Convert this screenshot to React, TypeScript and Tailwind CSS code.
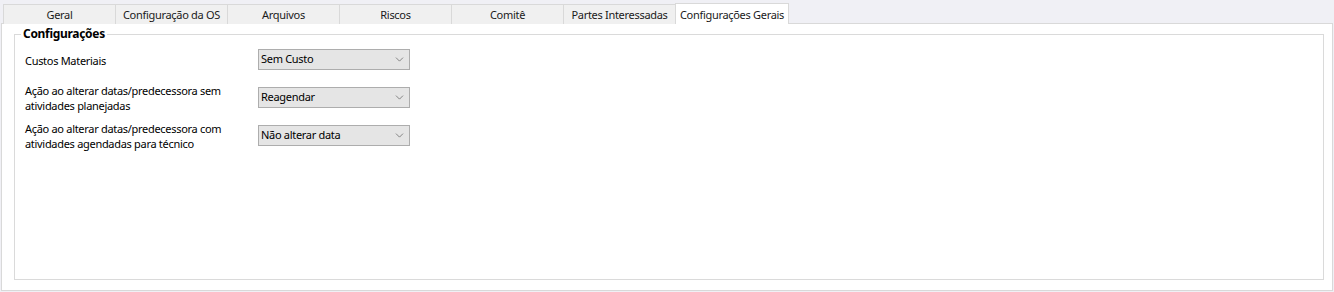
import { ChevronDown } from "lucide-react";

const tabs = [
  "Geral",
  "Configuração da OS",
  "Arquivos",
  "Riscos",
  "Comitê",
  "Partes Interessadas",
];

function Select({ value }: { value: string }) {
  return (
    <div className="w-[152px] h-[21px] bg-[#e5e5e5] border border-[#adadad] flex items-center justify-between pl-[2px] pr-[3px] text-black">
      <span className="whitespace-nowrap">{value}</span>
      <ChevronDown className="w-[13px] h-[13px] text-[#505050]" strokeWidth={1.2} />
    </div>
  );
}

export default function App() {
  return (
    <div
      className="w-[1334px] h-[292px] bg-[#f0f0f5] flex flex-col text-[11px] tracking-[-0.3px] text-black"
      style={{ fontFamily: '"Noto Sans", "Open Sans", sans-serif' }}
    >
      {/* Tab strip */}
      <div className="flex items-end pl-[3px] pt-[3px] h-[24px] relative z-10 -mb-px">
        {tabs.map((t) => (
          <div
            key={t}
            className="w-[112px] h-[20px] bg-[#f0f0f0] border-t border-l border-[#d9d9d9] flex items-center justify-center leading-none whitespace-nowrap text-[#1a1a1a]"
          >
            {t}
          </div>
        ))}
        <div className="w-[114px] h-[21px] bg-white border-t border-l border-r border-[#d9d9d9] flex items-center justify-center leading-none whitespace-nowrap text-[#1a1a1a]">
          Configurações Gerais
        </div>
      </div>

      {/* Panel */}
      <div className="ml-px mr-px mb-px flex-1 bg-white border border-[#d9d9d9] pl-[12px] pr-[8px] pt-[2px] pb-[10px] flex">
        <fieldset className="flex-1 border border-[#dadada] pl-0 pt-[7px]">
          <legend className="ml-[6px] px-[2px] font-bold text-[12px] leading-[16px] text-black">
            Configurações
          </legend>
          <div className="flex flex-col gap-[17px] pl-[10px]">
            <div className="flex items-center h-[21px]">
              <div className="w-[233px] leading-[15px] pt-px">Custos Materiais</div>
              <Select value="Sem Custo" />
            </div>
            <div className="flex items-center h-[21px]">
              <div className="w-[233px] leading-[15px] whitespace-nowrap">
                Ação ao alterar datas/predecessora sem
                <br />
                atividades planejadas
              </div>
              <Select value="Reagendar" />
            </div>
            <div className="flex items-center h-[21px]">
              <div className="w-[233px] leading-[15px] whitespace-nowrap">
                Ação ao alterar datas/predecessora com
                <br />
                atividades agendadas para técnico
              </div>
              <Select value="Não alterar data" />
            </div>
          </div>
        </fieldset>
      </div>
    </div>
  );
}
